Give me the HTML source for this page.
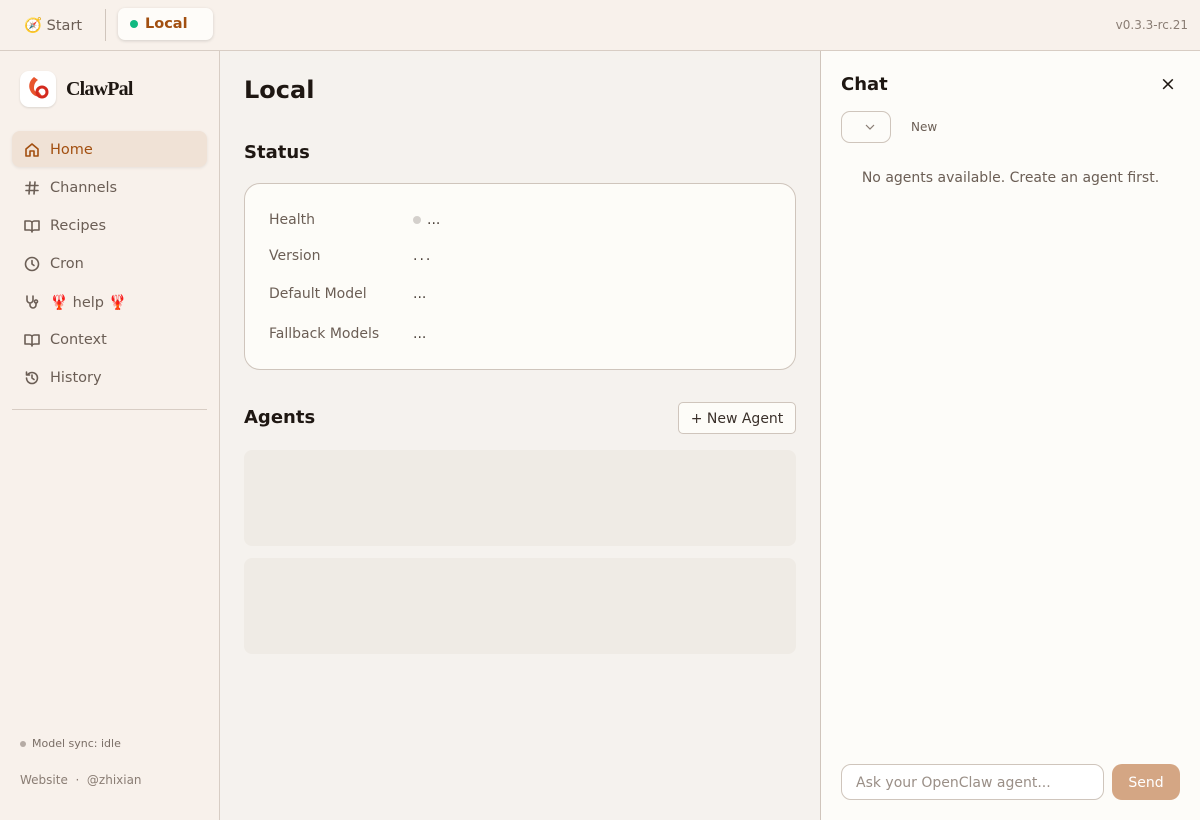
<!DOCTYPE html>
<html><head><meta charset="utf-8"><style>
*{box-sizing:border-box;margin:0;padding:0}
body{width:1200px;height:820px;overflow:hidden;font-family:"DejaVu Sans","Liberation Sans",sans-serif;background:#f5f2ee;color:#2a211c;position:relative}
.top{position:absolute;left:0;top:0;width:1200px;height:51px;background:#f8f1eb;border-bottom:1px solid #d8cdc4}
.side{position:absolute;left:0;top:51px;width:220px;height:769px;background:#f8f1eb;border-right:1px solid #d8cdc4}
.main{position:absolute;left:220px;top:51px;width:600px;height:769px;background:#f5f2ee}
.chat{position:absolute;left:820px;top:51px;width:380px;height:769px;background:#fdfcf9;border-left:1px solid #d0c5bc}
.nav{position:absolute;left:12px;width:195px;height:36px;border-radius:8px;font-size:14.5px;color:#6b5e55;display:flex;align-items:center;padding-left:12px;padding-top:2px}
.nav svg{width:16px;height:16px;margin-right:10px;fill:none;stroke:#6b5e55;stroke-width:1.6;stroke-linecap:round;stroke-linejoin:round}
.row{position:absolute;left:24px;font-size:14px;color:#6b5e55}
.val{position:absolute;left:168px;font-size:14px;color:#4a3f38}
</style></head><body>
<div class="top">
 <div style="position:absolute;left:24px;top:17px;font-size:14.5px;color:#6b5e55">🧭 Start</div>
 <div style="position:absolute;left:105px;top:9px;width:1px;height:32px;background:#d0c5bc"></div>
 <div style="position:absolute;left:118px;top:8px;width:95px;height:32px;background:#fefcf9;border-radius:7px;box-shadow:0 1px 3px rgba(0,0,0,.15)">
  <span style="position:absolute;left:12px;top:12px;width:8px;height:8px;border-radius:50%;background:#10b981"></span>
  <span style="position:absolute;left:27px;top:8px;font-size:14.5px;font-weight:bold;color:#a24f10">Local</span></div>
 <div style="position:absolute;right:12px;top:18px;font-size:12px;color:#8a7d74">v0.3.3-rc.21</div>
</div>
<div class="side">
 <div style="position:absolute;left:20px;top:20px;width:36px;height:36px;border-radius:9px;background:#fff;box-shadow:0 1px 2px rgba(0,0,0,.12)">
  <svg width="36" height="36" viewBox="0 0 36 36"><path d="M14 6c-4 3-6 8-4 13 2 5 7 8 12 6l-3-4c-3 1-5-1-5-4 0-3 1-6 4-8z" fill="#e8552e"/><circle cx="22" cy="21" r="5" fill="none" stroke="#d42a1e" stroke-width="3"/></svg></div>
 <div style="position:absolute;left:66px;top:27px;font-family:'Liberation Serif',serif;font-weight:bold;font-size:20px;color:#1e1712;letter-spacing:-.8px">ClawPal</div>
 <div class="nav" style="top:80px;background:#f0e2d6;color:#a24f10;box-shadow:0 1px 3px rgba(0,0,0,.08)"><svg style="stroke:#a24f10" viewBox="0 0 16 16"><path d="M2 7l6-5 6 5v7H10V9H6v5H2z"/></svg>Home</div>
 <div class="nav" style="top:118px"><svg viewBox="0 0 16 16"><path d="M6 2L5 14M11 2l-1 12M2 5.5h12M2 10.5h12"/></svg>Channels</div>
 <div class="nav" style="top:156px"><svg viewBox="0 0 16 16"><path d="M1 3h4.5C7 3 8 4 8 5v9c0-1-1-2-2.5-2H1zM15 3h-4.5C9 3 8 4 8 5v9c0-1 1-2 2.5-2H15z"/></svg>Recipes</div>
 <div class="nav" style="top:194px"><svg viewBox="0 0 16 16"><circle cx="8" cy="8" r="6.5"/><path d="M8 4.5V8l2 1.5"/></svg>Cron</div>
 <div class="nav" style="top:232px"><svg viewBox="0 0 16 16"><path d="M3 2v4a3 3 0 006 0V2M6 9v2a3 3 0 006 0V9"/><circle cx="12" cy="7.5" r="1.5"/></svg>🦞 help 🦞</div>
 <div class="nav" style="top:270px"><svg viewBox="0 0 16 16"><path d="M1 3h4.5C7 3 8 4 8 5v9c0-1-1-2-2.5-2H1zM15 3h-4.5C9 3 8 4 8 5v9c0-1 1-2 2.5-2H15z"/></svg>Context</div>
 <div class="nav" style="top:308px"><svg viewBox="0 0 16 16"><path d="M2.5 8a5.5 5.5 0 105.5-5.5A5.5 5.5 0 004 4.3M2.5 2v3h3M8 5v3l2 1.5"/></svg>History</div>
 <div style="position:absolute;left:12px;top:358px;width:195px;height:1px;background:#d8cdc4"></div>
 <div style="position:absolute;left:20px;top:690px;width:6px;height:6px;border-radius:50%;background:#b5aba4"></div>
 <div style="position:absolute;left:32px;top:686px;font-size:11px;color:#7a6e66">Model sync: idle</div>
 <div style="position:absolute;left:20px;top:722px;font-size:12px;color:#8a7d74">Website &nbsp;·&nbsp; @zhixian</div>
</div>
<div class="main">
 <div style="position:absolute;left:24px;top:25px;font-size:24px;font-weight:bold;color:#1e1712">Local</div>
 <div style="position:absolute;left:24px;top:91px;font-size:18px;font-weight:bold;color:#1e1712">Status</div>
 <div style="position:absolute;left:24px;top:132px;width:552px;height:187px;background:#fdfcf8;border:1px solid #cfc5bc;border-radius:16px">
  <div class="row" style="top:28px">Health</div><span style="position:absolute;left:168px;top:32px;width:8px;height:8px;border-radius:50%;background:#d4d0cc"></span><div class="val" style="left:182px;top:28px">...</div>
  <div class="row" style="top:64px">Version</div><div class="val" style="top:64px;letter-spacing:2px">...</div>
  <div class="row" style="top:102px">Default Model</div><div class="val" style="top:102px">...</div>
  <div class="row" style="top:142px">Fallback Models</div><div class="val" style="top:142px">...</div>
 </div>
 <div style="position:absolute;left:24px;top:356px;font-size:18px;font-weight:bold;color:#1e1712">Agents</div>
 <div style="position:absolute;left:458px;top:351px;width:118px;height:32px;background:#fdfcf8;border:1px solid #cfc5bc;border-radius:5px;font-size:14px;color:#3a302a;text-align:center;line-height:32px">+ New Agent</div>
 <div style="position:absolute;left:24px;top:399px;width:552px;height:96px;background:#efebe5;border-radius:8px"></div>
 <div style="position:absolute;left:24px;top:507px;width:552px;height:96px;background:#efebe5;border-radius:8px"></div>
</div>
<div class="chat">
 <div style="position:absolute;left:20px;top:23px;font-size:18px;font-weight:bold;color:#1e1712">Chat</div>
 <div style="position:absolute;left:339px;top:22px;font-size:19px;color:#1e1712">×</div>
 <div style="position:absolute;left:20px;top:60px;width:50px;height:32px;border:1px solid #cfc5bc;border-radius:9px"><svg width="50" height="30" viewBox="0 0 50 30"><path d="M24 13l4 4 4-4" stroke="#8a7d74" fill="none" stroke-width="1.2"/></svg></div>
 <div style="position:absolute;left:90px;top:69px;font-size:12px;color:#6b5e55">New</div>
 <div style="position:absolute;left:0;width:379px;top:119px;text-align:center;font-size:14px;color:#6b5e55">No agents available. Create an agent first.</div>
 <div style="position:absolute;left:20px;top:713px;width:263px;height:36px;border:1px solid #cfc5bc;border-radius:10px;background:#fff;font-size:14px;color:#9a8f87;padding:10px 14px">Ask your OpenClaw agent...</div>
 <div style="position:absolute;left:291px;top:713px;width:68px;height:36px;background:#d4a684;border-radius:10px;color:#fff;font-size:14px;text-align:center;line-height:38px">Send</div>
</div>
</body></html>
